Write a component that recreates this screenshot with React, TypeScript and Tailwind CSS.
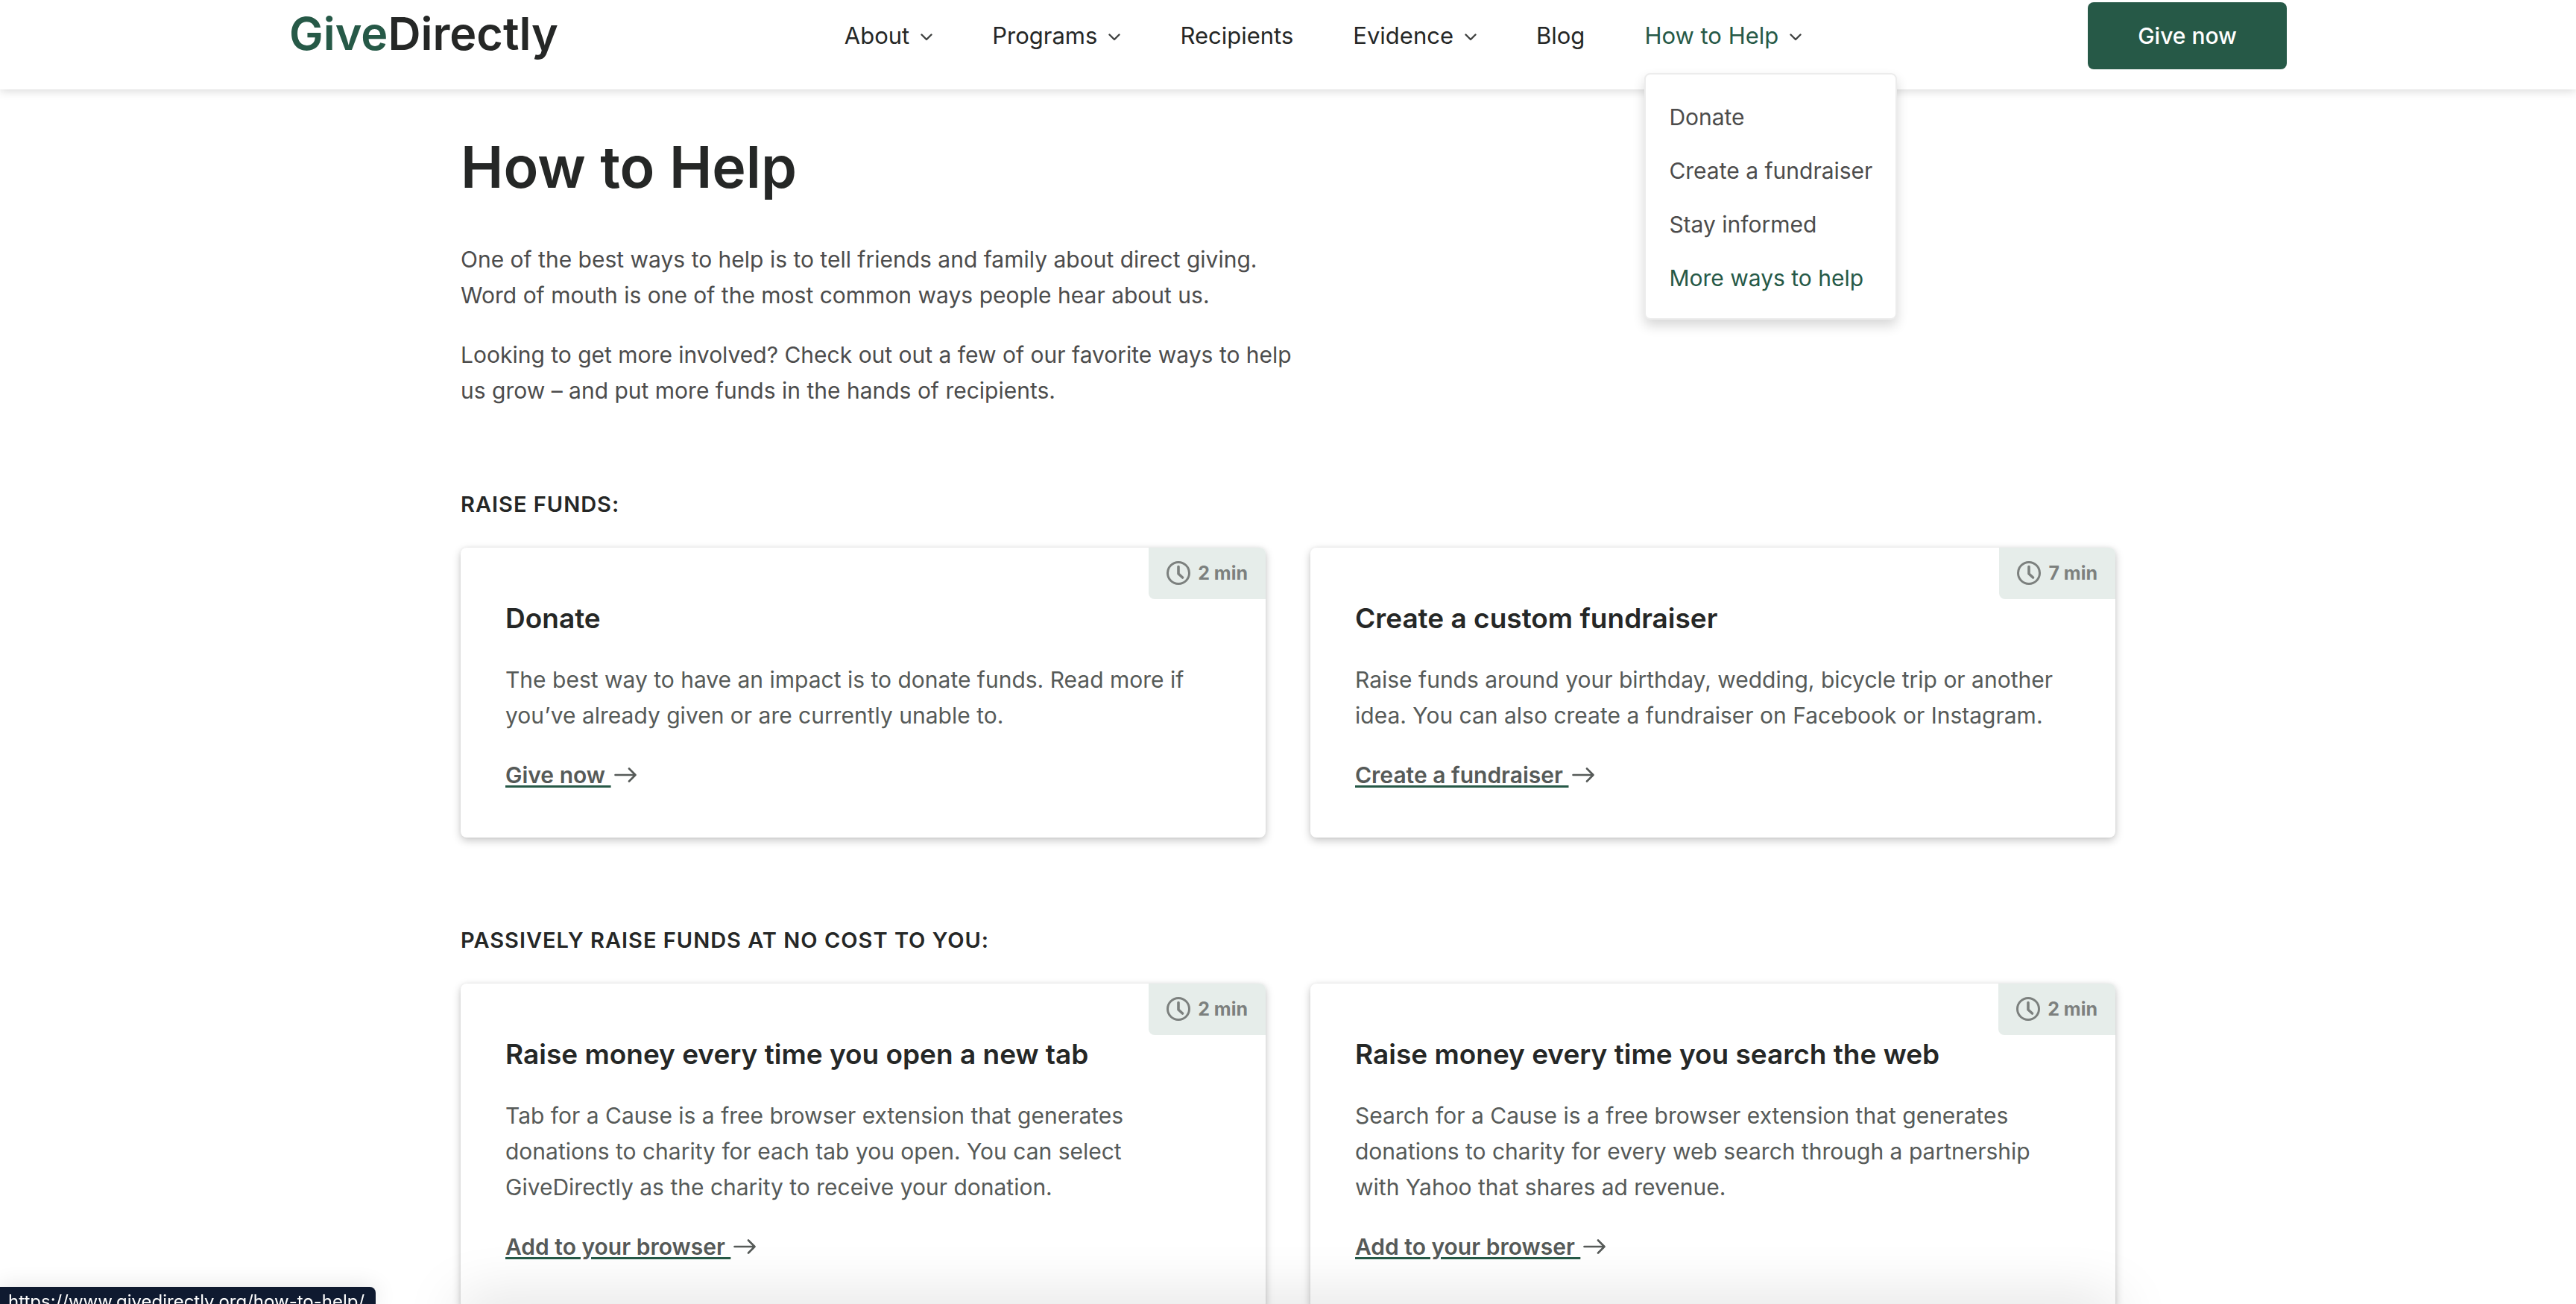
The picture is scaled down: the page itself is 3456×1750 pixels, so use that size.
type Card = { time: string; title: string; body: string; link: string };

const navItems = [
  { label: "About", menu: true },
  { label: "Programs", menu: true },
  { label: "Recipients", menu: false },
  { label: "Evidence", menu: true },
  { label: "Blog", menu: false },
];

const helpMenu = ["Donate", "Create a fundraiser", "Stay informed"];

const raise: Card[] = [
  {
    time: "2 min",
    title: "Donate",
    body: "The best way to have an impact is to donate funds. Read more if you’ve already given or are currently unable to.",
    link: "Give now",
  },
  {
    time: "7 min",
    title: "Create a custom fundraiser",
    body: "Raise funds around your birthday, wedding, bicycle trip or another idea. You can also create a fundraiser on Facebook or Instagram.",
    link: "Create a fundraiser",
  },
];

const passive: Card[] = [
  {
    time: "2 min",
    title: "Raise money every time you open a new tab",
    body: "Tab for a Cause is a free browser extension that generates donations to charity for each tab you open. You can select GiveDirectly as the charity to receive your donation.",
    link: "Add to your browser",
  },
  {
    time: "2 min",
    title: "Raise money every time you search the web",
    body: "Search for a Cause is a free browser extension that generates donations to charity for every web search through a partnership with Yahoo that shares ad revenue.",
    link: "Add to your browser",
  },
];

function Chevron() {
  return (
    <svg className="mt-1 h-[10px] w-4 text-[#3f4140]" viewBox="0 0 16 10" fill="none" stroke="currentColor" strokeWidth="2.4" strokeLinecap="round" strokeLinejoin="round" aria-hidden="true">
      <path d="M1.5 1.5 8 8l6.5-6.5" />
    </svg>
  );
}

function Clock() {
  return (
    <svg className="size-8" viewBox="0 0 32 32" fill="none" stroke="currentColor" strokeWidth="3" aria-hidden="true">
      <circle cx="16" cy="16" r="14.5" />
      <path d="M16 7.5v9.5l5.5 5" strokeWidth="3.6" strokeLinecap="round" strokeLinejoin="round" />
    </svg>
  );
}

function Arrow() {
  return (
    <svg className="ml-1 h-5 w-[30px]" viewBox="0 0 30 20" fill="none" stroke="currentColor" strokeWidth="2.6" strokeLinecap="round" strokeLinejoin="round" aria-hidden="true">
      <path d="M1.5 10h27M20 1.5l8.5 8.5L20 18.5" />
    </svg>
  );
}

function HelpCard({ card }: { card: Card }) {
  return (
    <article className="relative rounded-lg bg-white px-[60px] pt-[71px] pb-[60px] text-[#565a58] shadow-[0_4px_12px_rgba(0,0,0,0.22),0_0_5px_rgba(0,0,0,0.06)]">
      <div className="absolute top-0 right-0 flex h-[69px] items-center gap-[10px] rounded-tr-lg rounded-bl-lg bg-[#e6edea] px-6 pb-[2px] text-[25px] font-bold text-[#7c807e]">
        <Clock />
        <span>{card.time}</span>
      </div>
      <h3 className="text-[37px] leading-[48px] font-semibold text-[#252726]">{card.title}</h3>
      <p className="mt-[34px]">{card.body}</p>
      <a href="#" className="mt-8 inline-flex items-center font-semibold">
        <span className="whitespace-pre underline decoration-[#265947] decoration-[3px] underline-offset-[3px]">{card.link + " "}</span>
        <Arrow />
      </a>
    </article>
  );
}

function Section({ title, cards }: { title: string; cards: Card[] }) {
  return (
    <section>
      <h2 className="mb-[38px] text-[29px] leading-10 font-semibold tracking-[1px] text-[#252726] uppercase">{title}</h2>
      <div className="grid grid-cols-2 gap-[60px]">
        {cards.map((card) => (
          <HelpCard key={card.title} card={card} />
        ))}
      </div>
    </section>
  );
}

export default function App() {
  return (
    <div className="min-h-screen bg-white font-['Inter',sans-serif] text-[30px] leading-[48px] text-[#4c4c4c]">
      <header className="relative z-10 bg-white pt-[3px] pb-[27px] text-[#252726] shadow-[0_2px_12px_rgba(0,0,0,0.16)]">
        <div className="mx-auto flex h-[90px] max-w-[2680px] items-center justify-between">
          <a href="#" className="pb-[6px] text-[61px] leading-[72px] font-semibold text-[#252726]">
            <span className="text-[#265947]">Give</span>Directly
          </a>
          <nav className="flex gap-20 text-[31px]">
            {navItems.map((item) => (
              <a key={item.label} href="#" className="flex h-[90px] items-center gap-[15px]">
                {item.label}
                {item.menu && <Chevron />}
              </a>
            ))}
            <div className="relative">
              <a href="#" aria-expanded="true" className="flex h-[90px] items-center gap-[15px] text-[#265947]">
                How to Help
                <Chevron />
              </a>
              <ul className="absolute top-[95px] left-0 rounded-lg border-2 border-[#ececec] bg-white px-[31px] pt-[21px] pb-[18px] text-[30px] leading-[72px] whitespace-nowrap text-[#4c4c4c] shadow-[0_8px_16px_rgba(0,0,0,0.16)]">
                {helpMenu.map((label) => (
                  <li key={label}>
                    <a href="#">{label}</a>
                  </li>
                ))}
                <li>
                  <a href="#" className="text-[#265947]">More ways to help</a>
                </li>
              </ul>
            </div>
          </nav>
          <button type="button" className="h-[90px] rounded-lg bg-[#265947] px-[67px] font-medium text-white">Give now</button>
        </div>
      </header>

      <main className="mx-auto max-w-[2220px] pt-14">
        <h1 className="text-[77px] leading-[96px] font-semibold text-[#252726]">How to Help</h1>
        <div className="mt-[52px] mb-[109px] max-w-[1140px] space-y-8">
          <p>One of the best ways to help is to tell friends and family about direct giving. Word of mouth is one of the most common ways people hear about us.</p>
          <p>Looking to get more involved? Check out out a few of our favorite ways to help us grow – and put more funds in the hands of recipients.</p>
        </div>
        <div className="space-y-[118px]">
          <Section title="Raise funds:" cards={raise} />
          <Section title="Passively raise funds at no cost to you:" cards={passive} />
        </div>
      </main>

      <div className="pointer-events-none fixed inset-x-0 top-full mx-auto h-10 max-w-[2220px] shadow-[0_0_80px_rgba(0,0,0,0.18)]" />
      <div className="fixed bottom-0 left-0 h-[23px] overflow-hidden rounded-tr-lg bg-[#0f1a30] pt-1 pr-[15px] pl-[11px] text-[24px] leading-8 text-white shadow-[0_0_30px_rgba(0,0,0,0.12)]">
        https://www.givedirectly.org/how-to-help/
      </div>
    </div>
  );
}
